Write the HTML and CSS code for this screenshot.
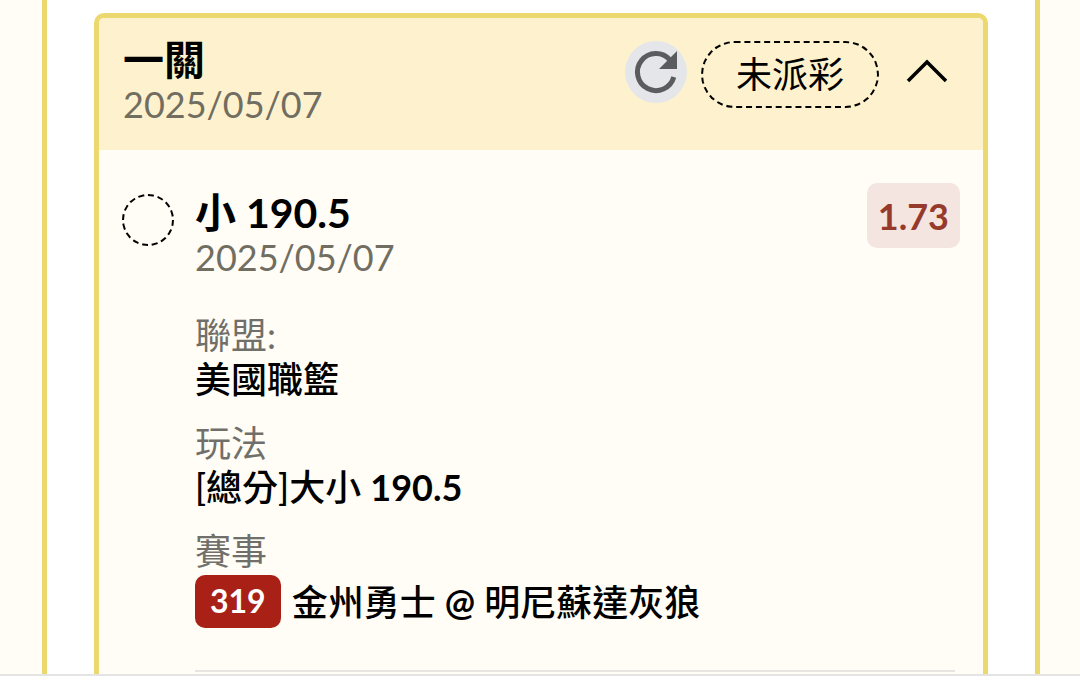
FILE: index.html
```html
<!DOCTYPE html>
<html lang="zh-Hant">
<head>
<meta charset="utf-8">
<meta name="viewport" content="width=device-width, initial-scale=1">
<title>投注紀錄</title>
<link rel="stylesheet" href="styles.css">
</head>
<body>
<main class="viewport">
  <section class="sheet">
    <article class="ticket">
      <header class="ticket-head">
        <div class="ticket-title">
          <h1 class="title">一關</h1>
          <time class="date" datetime="2025-05-07">2025/05/07</time>
        </div>
        <div class="actions">
          <button class="refresh" type="button" aria-label="重新整理">
            <svg viewBox="0 0 62 62" aria-hidden="true">
              <path d="M45 19A18.500 18.500 0 1 0 48.800 36" fill="none" stroke="#5b5c5e" stroke-width="5"/>
              <path d="M52 10V28H34z" fill="#5b5c5e"/>
            </svg>
          </button>
          <span class="status">未派彩</span>
          <button class="toggle" type="button" aria-label="收合">
            <svg viewBox="0 0 44 28" aria-hidden="true">
              <path d="M3 24L22 5L41 24" fill="none" stroke="#000" stroke-width="3.500"/>
            </svg>
          </button>
        </div>
      </header>
      <div class="bet">
        <span class="marker"></span>
        <div class="bet-main">
          <div class="bet-top">
            <div>
              <h2 class="title">小 190.5</h2>
              <time class="date" datetime="2025-05-07">2025/05/07</time>
            </div>
            <span class="odds">1.73</span>
          </div>
          <dl class="details">
            <div class="detail"><dt>聯盟:</dt><dd>美國職籃</dd></div>
            <div class="detail"><dt>玩法</dt><dd>[總分]大小 <b>190.5</b></dd></div>
            <div class="detail"><dt>賽事</dt><dd class="match"><span class="code">319</span><span>金州勇士 <b>@</b> 明尼蘇達灰狼</span></dd></div>
          </dl>
        </div>
      </div>
    </article>
  </section>
</main>
<footer class="bottom-bar"></footer>
</body>
</html>
```
FILE: styles.css
```css
* { box-sizing: border-box; }

body {
  margin: 0;
  height: 100vh;
  display: flex;
  flex-direction: column;
  background: #fffdf6;
  color: #000;
  font: 400 36px/44px Lato, "Noto Sans CJK TC", sans-serif;
}

h1, h2, dl, dd { margin: 0; }

button {
  padding: 0;
  border: 0;
  background: none;
}

svg { display: block; width: 100%; }

.viewport {
  flex: 1;
  min-height: 0;
  overflow: hidden;
  display: flex;
  padding: 0 40px 0 42px;
}

.sheet {
  flex: 1;
  padding: 13px 47px 0;
  background: #fff;
  border: solid #ebd970;
  border-width: 0 5px;
}

.ticket {
  min-height: 120vh;
  background: #fffdf6;
  border: 5px solid #ebd970;
  border-radius: 10px;
  overflow: hidden;
}

.ticket-head {
  display: flex;
  justify-content: space-between;
  align-items: flex-start;
  padding: 20px 34px 24px 24px;
  background: #fdf2cd;
}

.title {
  font-size: 41px;
  line-height: 44px;
  font-weight: 700;
}

.date {
  display: block;
  color: #716d61;
}

.actions {
  display: flex;
  align-items: flex-start;
  gap: 14px;
  padding-top: 3px;
}

.refresh {
  width: 62px;
  height: 62px;
  border-radius: 50%;
  background: #e4e6ea;
}

.status {
  padding: 9px 33px 10px;
  border: 2px dashed #000;
  border-radius: 34px;
}

.toggle {
  width: 44px;
  margin: 16px 0 0 12px;
}

.bet {
  display: flex;
  align-items: flex-start;
  gap: 21px;
  padding: 33px 23px 0;
}

.marker {
  flex: none;
  width: 52px;
  height: 52px;
  margin-top: 11px;
  border: 2px dashed #000;
  border-radius: 50%;
}

.bet-main {
  flex: 1;
}

.bet-top {
  display: flex;
  justify-content: space-between;
  align-items: flex-start;
}

.bet-top .title { margin-top: 8px; }

.odds {
  padding: 11px 11px 10px;
  border-radius: 10px;
  background: #f5e5e1;
  color: #963a2c;
  font-weight: 700;
}

.details {
  display: grid;
  gap: 20px;
  margin-right: 5px;
  padding: 34px 0 42px;
  border-bottom: 2px solid #e6e5e2;
}

dt { color: #716f6a; }

dd { font-weight: 500; }

.match {
  display: flex;
  align-items: center;
  gap: 11px;
  margin-top: 2px;
}

.code {
  padding: 4px 15px 5px;
  border-radius: 10px;
  background: #a92017;
  color: #fff;
  font-size: 32px;
  font-weight: 700;
}

.bottom-bar {
  height: 6px;
  background: #fff;
  border-top: 2px solid #e4e4e4;
}
```
